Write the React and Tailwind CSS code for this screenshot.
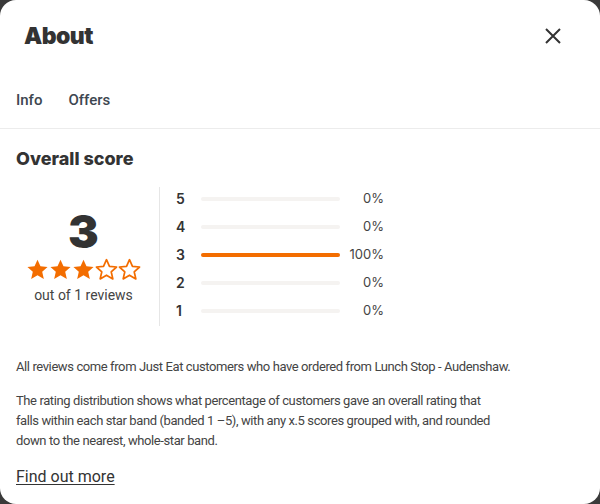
import React from 'react'

const bands = [
  { star: 5, pct: 0 },
  { star: 4, pct: 0 },
  { star: 3, pct: 100 },
  { star: 2, pct: 0 },
  { star: 1, pct: 0 },
]

function Star({ filled }) {
  return (
    <svg width="23" height="23" viewBox="0 0 24 24">
      <path
        d="M12 1.8l3.1 6.9 7.4.7-5.6 5 1.7 7.4L12 17.9l-6.6 3.9 1.7-7.4-5.6-5 7.4-.7z"
        fill={filled ? '#f36d00' : 'none'}
        stroke="#f36d00"
        strokeWidth={filled ? 0 : 1.8}
        strokeLinejoin="round"
      />
    </svg>
  )
}

export default function App() {
  return (
    <div className="w-[600px] h-[504px] bg-[#3a3a3a] overflow-hidden">
      <div className="h-full bg-white rounded-[16px] flex flex-col" style={{ fontFamily: 'Roboto, sans-serif' }}>
        {/* Header */}
        <div className="flex items-center justify-between pl-6 pr-[38px] pt-[16px] h-[56px]">
          <h1 className="text-[23px] font-black text-[#333] tracking-tight" style={{ fontFamily: 'Inter, sans-serif' }}>About</h1>
          <svg width="18" height="18" viewBox="0 0 18 18" className="text-[#333]">
            <path d="M2 2l14 14M16 2L2 16" stroke="currentColor" strokeWidth="2" />
          </svg>
        </div>

        {/* Tabs */}
        <div className="flex gap-[26px] px-4 pt-[33px] pb-[16px] border-b border-[#ececec] text-[15px] font-medium text-[#3d4650]">
          <span>Info</span>
          <span>Offers</span>
        </div>

        {/* Overall score */}
        <div className="px-4 pt-[18px]">
          <h2 className="text-[18px] font-extrabold text-[#333] leading-6" style={{ fontFamily: 'Inter, sans-serif' }}>Overall score</h2>

          <div className="flex items-start mt-[14px]">
            <div className="w-[144px] h-[139px] mt-[2px] pr-[8px] flex flex-col items-center justify-center border-r border-[#e6e6e6]">
              <div className="text-[46px] leading-[50px] font-black text-[#333]" style={{ fontFamily: 'Inter, sans-serif' }}>3</div>
              <div className="flex mt-[2px]">
                {[1, 2, 3, 4, 5].map((i) => (
                  <Star key={i} filled={i <= 3} />
                ))}
              </div>
              <div className="text-[14px] text-[#444] mt-[4px]">out of 1 reviews</div>
            </div>

            <div className="flex flex-col pl-[16px]" style={{ fontFamily: 'Inter, sans-serif' }}>
              {bands.map((b) => (
                <div key={b.star} className="flex items-center h-[28px]">
                  <span className="w-[25px] text-[14px] font-semibold text-[#333]">{b.star}</span>
                  <div className="w-[139px] h-[4px] rounded-full bg-[#f5f3f1]">
                    <div className="h-full rounded-full bg-[#f36d00]" style={{ width: `${b.pct}%` }} />
                  </div>
                  <span className="w-[44px] text-right text-[13px] text-[#444]">{b.pct}%</span>
                </div>
              ))}
            </div>
          </div>
        </div>

        {/* Notes */}
        <div className="px-4 pt-[31px] text-[13px] leading-5 text-[#444] tracking-[-0.4px]">
          <p>All reviews come from Just Eat customers who have ordered from Lunch Stop - Audenshaw.</p>
          <p className="mt-[14px]">
            The rating distribution shows what percentage of customers gave an overall rating that<br />
            falls within each star band (banded 1 –5), with any x.5 scores grouped with, and rounded<br />
            down to the nearest, whole-star band.
          </p>
          <a href="#" className="inline-block mt-[16px] text-[16px] tracking-normal text-[#333] underline underline-offset-2">Find out more</a>
        </div>
      </div>
    </div>
  )
}
